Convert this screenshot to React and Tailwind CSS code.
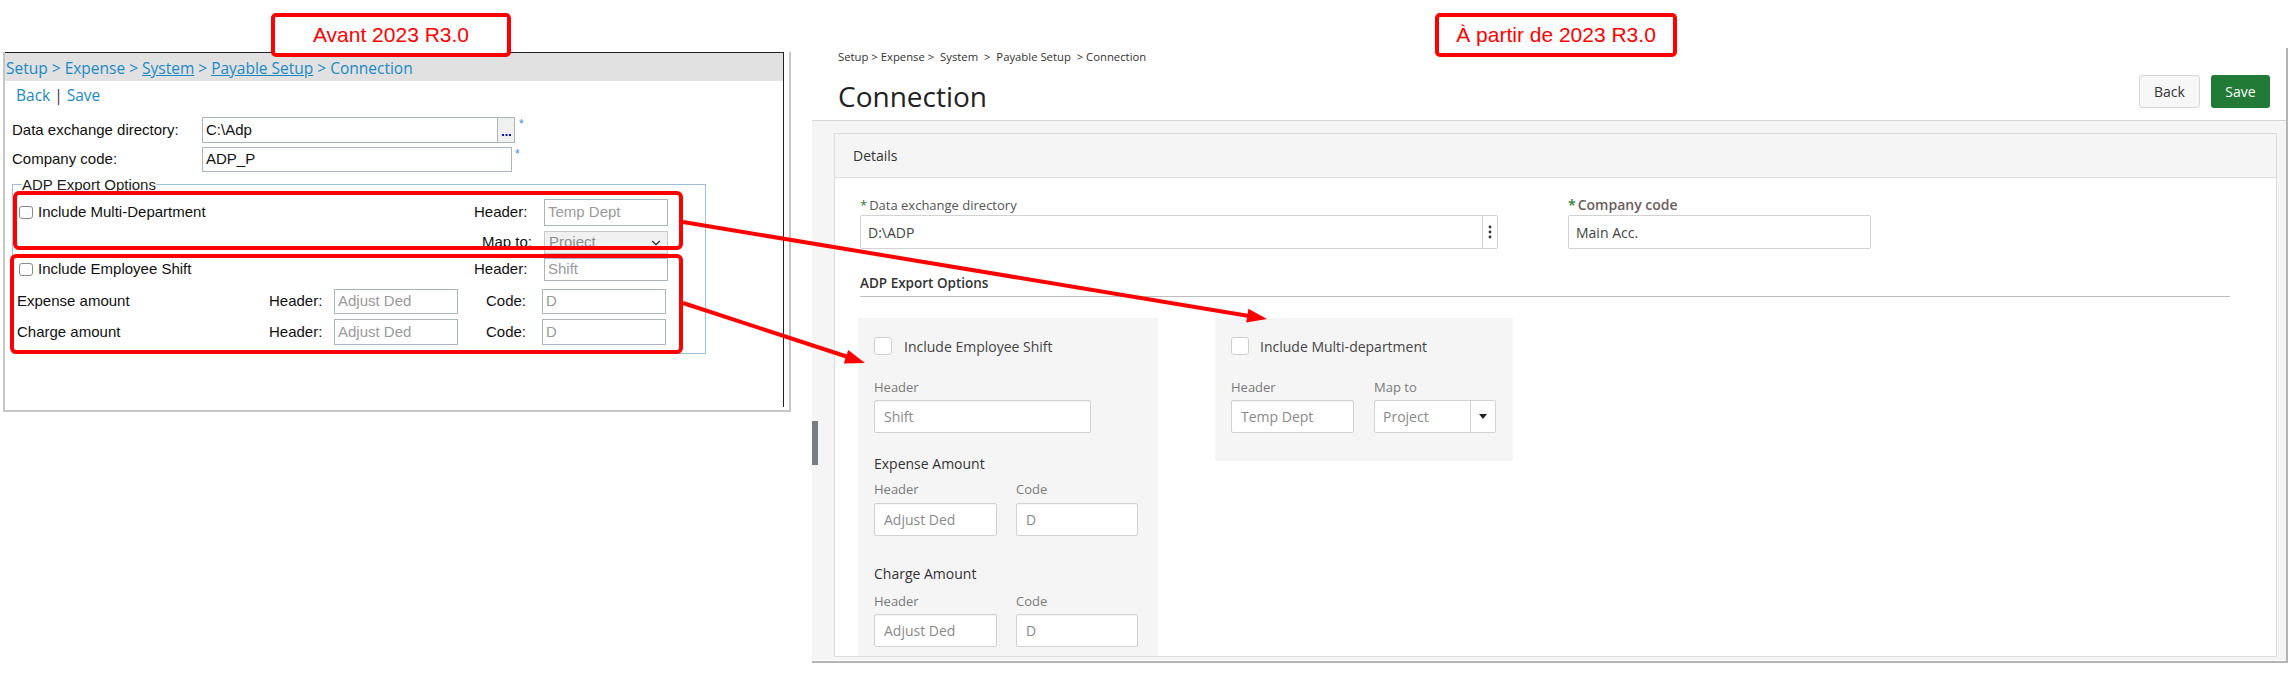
import React from 'react';
import { ChevronDown } from 'lucide-react';

const oldFont = { fontFamily: '"Liberation Sans", Arial, sans-serif' };
const segFont = { fontFamily: '"Open Sans", "Noto Sans", sans-serif' };

const OldInput = ({ value, w, h, muted }) => (
    <div
        className={`${w} ${h} border border-[#aab6bf] bg-white flex items-center px-[3px] text-[15px] ${muted ? 'text-[#9a9a9a]' : 'text-[#111]'}`}
    >
        {value}
    </div>
);

const OldCheck = () => (
    <div className="w-[14px] h-[13px] border border-[#8a8a8a] rounded-[3px] bg-white shrink-0" />
);

const OldPanel = () => (
    <div
        className="ml-[3px] mt-[52px] w-[788px] border-l-2 border-b-2 border-r-2 border-[#c6c6c6] pr-[5px] pb-[3px] shrink-0"
        style={oldFont}
    >
        <div className="w-[779px] h-[355px] border-t border-r border-[#222] bg-white">
            {/* breadcrumb bar */}
            <div
                className="h-[28px] bg-[#e1e1e1] flex items-center pt-[4px] pl-[1px] text-[15.5px] text-[#1b8ac6]"
                style={segFont}
            >
                <span>Setup &gt; Expense &gt; </span>
                <span className="underline ml-[4px]">System</span>
                <span className="ml-[4px]">&gt;</span>
                <span className="underline ml-[4px]">Payable Setup</span>
                <span className="ml-[4px]">&gt; Connection</span>
            </div>

            <div className="h-[30px] flex items-center pl-[11px] text-[15.5px]" style={segFont}>
                <span className="text-[#1b8ac6]">Back</span>
                <span className="text-[#3b2a55] mx-[4px]">|</span>
                <span className="text-[#1b8ac6]">Save</span>
            </div>

            <div className="mt-[6px] h-[26px] flex items-center text-[15px] text-[#111]">
                <div className="w-[197px] pl-[7px]">Data exchange directory:</div>
                <OldInput value="C:\Adp" w="w-[296px]" h="h-[26px]" />
                <div className="w-[17px] h-[26px] border border-l-0 border-[#aab6bf] bg-[#f0f0f0] flex items-end justify-center pb-[6px]">
                    <svg width="9" height="2" viewBox="0 0 9 2">
                        <rect x="0" y="0" width="2" height="2" fill="#1010d0" />
                        <rect x="3.5" y="0" width="2" height="2" fill="#1010d0" />
                        <rect x="7" y="0" width="2" height="2" fill="#1010d0" />
                    </svg>
                </div>
                <span className="self-start text-[#3a8fd0] text-[12px] ml-[4px] -mt-[2px]">*</span>
            </div>

            <div className="mt-[4px] h-[25px] flex items-center text-[15px] text-[#111]">
                <div className="w-[197px] pl-[7px]">Company code:</div>
                <OldInput value="ADP_P" w="w-[310px]" h="h-[25px]" />
                <span className="self-start text-[#3a8fd0] text-[12px] ml-[3px] -mt-[2px]">*</span>
            </div>

            <fieldset className="ml-[7px] mt-[4px] w-[694px] h-[178px] border border-[#9ec0d6] text-[15px] text-[#111]">
                <legend className="ml-[9px] leading-[17px] text-[#222]">ADP Export Options</legend>

                <div className="mt-[6px] h-[27px] flex items-center">
                    <div className="w-[461px] flex items-center pl-[6px]">
                        <OldCheck />
                        <span className="ml-[5px]">Include Multi-Department</span>
                    </div>
                    <div className="w-[70px]">Header:</div>
                    <OldInput value="Temp Dept" w="w-[124px]" h="h-[27px]" muted />
                </div>

                <div className="mt-[5px] h-[23px] flex items-center">
                    <div className="w-[469px]" />
                    <div className="w-[62px]">Map to:</div>
                    <div className="w-[124px] h-[23px] border border-[#c9c9c9] bg-[#f1f1f1] flex items-center justify-between px-[4px] text-[#8d8d8d]">
                        <span>Project</span>
                        <ChevronDown size={14} strokeWidth={2} className="text-[#333]" />
                    </div>
                </div>

                <div className="mt-[4px] h-[23px] flex items-center">
                    <div className="w-[461px] flex items-center pl-[6px]">
                        <OldCheck />
                        <span className="ml-[5px]">Include Employee Shift</span>
                    </div>
                    <div className="w-[70px]">Header:</div>
                    <OldInput value="Shift" w="w-[124px]" h="h-[23px]" muted />
                </div>

                <div className="mt-[8px] h-[25px] flex items-center">
                    <div className="w-[256px] pl-[4px]">Expense amount</div>
                    <div className="w-[65px]">Header:</div>
                    <OldInput value="Adjust Ded" w="w-[124px]" h="h-[25px]" muted />
                    <div className="w-[28px]" />
                    <div className="w-[56px]">Code:</div>
                    <OldInput value="D" w="w-[124px]" h="h-[25px]" muted />
                </div>

                <div className="mt-[5px] h-[26px] flex items-center">
                    <div className="w-[256px] pl-[4px]">Charge amount</div>
                    <div className="w-[65px]">Header:</div>
                    <OldInput value="Adjust Ded" w="w-[124px]" h="h-[26px]" muted />
                    <div className="w-[28px]" />
                    <div className="w-[56px]">Code:</div>
                    <OldInput value="D" w="w-[124px]" h="h-[26px]" muted />
                </div>
            </fieldset>
        </div>
    </div>
);

const NewInput = ({ value, w, muted }) => (
    <div
        className={`${w} h-[33px] border border-[#d2d2d2] rounded-[2px] bg-white flex items-center px-[9px] text-[14px] shadow-[inset_0_1px_1px_rgba(0,0,0,0.05)] ${muted ? 'text-[#8a8a8a]' : 'text-[#444]'}`}
    >
        {value}
    </div>
);

const NewCheck = () => (
    <div className="w-[18px] h-[18px] bg-white border border-[#cfcfcf] rounded-[3px] shrink-0" />
);

const SmallLabel = ({ children, w }) => (
    <div className={`${w} leading-[16px] text-[13px] text-[#7a7a7a]`}>{children}</div>
);

const NewPanel = () => (
    <div
        className="relative ml-[21px] mt-[48px] w-[1476px] h-[615px] border-r-2 border-b-2 border-[#b5b5b5] bg-white overflow-hidden shrink-0"
        style={segFont}
    >
        {/* header */}
        <div className="h-[72px] flex justify-between pl-[26px] pr-[16px]">
            <div>
                <div className="pt-[2px] leading-[14px] text-[11.3px] text-[#333] whitespace-pre">
                    {'Setup > Expense >  System  >  Payable Setup  > Connection'}
                </div>
                <div className="mt-[14px] leading-[36px] text-[28px] text-[#222]">Connection</div>
            </div>
            <div className="pt-[27px] flex gap-[11px]">
                <div className="w-[61px] h-[33px] rounded-[3px] border border-[#d6d6d6] bg-[#f7f7f7] flex items-center justify-center text-[14px] text-[#333]">
                    Back
                </div>
                <div className="w-[59px] h-[33px] rounded-[3px] bg-[#217a36] flex items-center justify-center text-[14px] text-white">
                    Save
                </div>
            </div>
        </div>

        {/* content area */}
        <div className="h-[540px] border-t border-[#d6d6d6] bg-[#f5f5f5] pl-[22px] pt-[12px] pr-[9px]">
            <div className="w-[1443px] h-[524px] border border-[#dcdcdc] bg-white overflow-hidden">
                <div className="h-[44px] bg-[#f5f5f5] border-b border-[#dcdcdc] flex items-center pl-[18px] text-[14px] text-[#333]">
                    Details
                </div>

                <div className="pl-[25px] pt-[19px]">
                    <div className="flex">
                        <div className="w-[638px]">
                            <div className="leading-[16px] flex items-baseline text-[13px] text-[#555]">
                                <span className="text-[#2e7d32] mr-[2px]">*</span>
                                <span>Data exchange directory</span>
                            </div>
                            <div className="mt-[2px] h-[34px] border border-[#d2d2d2] rounded-[2px] flex">
                                <div className="flex-1 flex items-center px-[7px] text-[14px] text-[#444]">D:\ADP</div>
                                <div className="w-[15px] border-l border-[#d2d2d2] flex items-center justify-center">
                                    <svg width="4" height="14" viewBox="0 0 4 14">
                                        <circle cx="2" cy="2" r="1.4" fill="#333" />
                                        <circle cx="2" cy="7" r="1.4" fill="#333" />
                                        <circle cx="2" cy="12" r="1.4" fill="#333" />
                                    </svg>
                                </div>
                            </div>
                        </div>
                        <div className="ml-[70px] w-[303px]">
                            <div className="leading-[16px] flex items-baseline text-[14px] font-semibold text-[#6b5d5d]">
                                <span className="text-[#2e7d32] mr-[2px]">*</span>
                                <span>Company code</span>
                            </div>
                            <div className="mt-[2px] h-[34px] border border-[#d2d2d2] rounded-[2px] flex items-center px-[7px] text-[14px] text-[#444]">
                                Main Acc.
                            </div>
                        </div>
                    </div>

                    <div className="mt-[24px] w-[1370px] border-b border-[#bdbdbd] pb-[3px] leading-[20px] text-[13.5px] font-semibold text-[#333]">
                        ADP Export Options
                    </div>

                    <div className="mt-[21px] flex items-start gap-[57px] -ml-[2px]">
                        {/* employee shift */}
                        <div className="w-[300px] h-[340px] bg-[#f5f5f5] pl-[16px] pt-[19px]">
                            <div className="h-[18px] flex items-center">
                                <NewCheck />
                                <span className="ml-[12px] text-[14px] text-[#444]">Include Employee Shift</span>
                            </div>
                            <div className="mt-[24px]">
                                <SmallLabel>Header</SmallLabel>
                            </div>
                            <div className="mt-[5px]">
                                <NewInput value="Shift" w="w-[217px]" muted />
                            </div>

                            <div className="mt-[22px] leading-[18px] text-[14px] text-[#333]">Expense Amount</div>
                            <div className="mt-[8px] flex">
                                <SmallLabel w="w-[142px]">Header</SmallLabel>
                                <SmallLabel>Code</SmallLabel>
                            </div>
                            <div className="mt-[6px] flex gap-[19px]">
                                <NewInput value="Adjust Ded" w="w-[123px]" muted />
                                <NewInput value="D" w="w-[122px]" muted />
                            </div>

                            <div className="mt-[29px] leading-[18px] text-[14px] text-[#333]">Charge Amount</div>
                            <div className="mt-[10px] flex">
                                <SmallLabel w="w-[142px]">Header</SmallLabel>
                                <SmallLabel>Code</SmallLabel>
                            </div>
                            <div className="mt-[5px] flex gap-[19px]">
                                <NewInput value="Adjust Ded" w="w-[123px]" muted />
                                <NewInput value="D" w="w-[122px]" muted />
                            </div>
                        </div>

                        {/* multi department */}
                        <div className="w-[298px] h-[143px] bg-[#f5f5f5] pl-[16px] pt-[19px]">
                            <div className="h-[18px] flex items-center">
                                <NewCheck />
                                <span className="ml-[11px] text-[14px] text-[#444]">Include Multi-department</span>
                            </div>
                            <div className="mt-[24px] flex">
                                <SmallLabel w="w-[143px]">Header</SmallLabel>
                                <SmallLabel>Map to</SmallLabel>
                            </div>
                            <div className="mt-[5px] flex gap-[20px]">
                                <NewInput value="Temp Dept" w="w-[123px]" muted />
                                <div className="w-[122px] h-[33px] border border-[#d2d2d2] rounded-[2px] bg-white flex">
                                    <div className="flex-1 flex items-center px-[8px] text-[14px] text-[#8a8a8a]">Project</div>
                                    <div className="w-[25px] border-l border-[#d2d2d2] flex items-center justify-center">
                                        <svg width="8" height="5" viewBox="0 0 8 5">
                                            <path d="M0 0 L8 0 L4 5 Z" fill="#222" />
                                        </svg>
                                    </div>
                                </div>
                            </div>
                        </div>
                    </div>
                </div>
            </div>
        </div>

        {/* collapse handle */}
        <div className="absolute left-0 top-[373px] w-[6px] h-[44px] bg-[#777d83]" />
    </div>
);

const Annotations = () => (
    <>
        <div
            className="absolute left-[271px] top-[13px] w-[240px] h-[44px] border-4 border-[#ff0000] rounded-[5px] bg-white flex items-center justify-center text-[21px] text-[#ff0000]"
            style={oldFont}
        >
            Avant 2023 R3.0
        </div>
        <div
            className="absolute left-[1435px] top-[13px] w-[242px] h-[44px] border-4 border-[#ff0000] rounded-[5px] bg-white flex items-center justify-center text-[21px] text-[#ff0000]"
            style={oldFont}
        >
            À partir de 2023 R3.0
        </div>

        <div className="absolute left-[13px] top-[191px] w-[670px] h-[59px] border-4 border-[#ff0000] rounded-[6px]" />
        <div className="absolute left-[10px] top-[254px] w-[673px] h-[100px] border-4 border-[#ff0000] rounded-[6px]" />

        <svg className="absolute left-0 top-0 pointer-events-none" width="2290" height="674">
            <line x1="683" y1="222" x2="1249" y2="316" stroke="#ff0000" strokeWidth="4" />
            <polygon points="1267,319 1246.2,322.6 1248.4,308.8" fill="#ff0000" />
            <line x1="683" y1="303" x2="848" y2="357" stroke="#ff0000" strokeWidth="4" />
            <polygon points="865,363 843.8,363.4 848.2,350.1" fill="#ff0000" />
        </svg>
    </>
);

export default function App() {
    return (
        <div className="relative w-[2290px] h-[674px] bg-white overflow-hidden flex items-start">
            <OldPanel />
            <NewPanel />
            <Annotations />
        </div>
    );
}
